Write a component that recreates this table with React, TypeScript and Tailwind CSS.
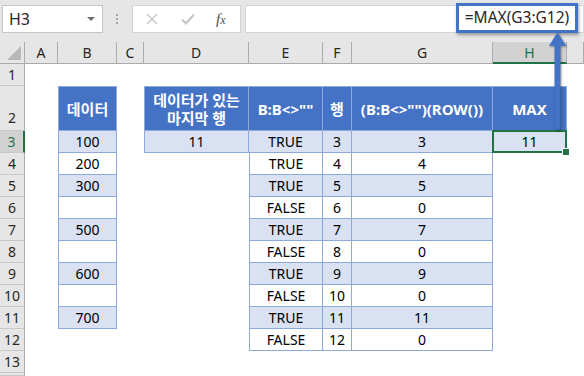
import React from "react";

const font = "font-['Noto_Sans','Noto_Sans_CJK_KR',sans-serif]";

const letters = ["A", "B", "C", "D", "E", "F", "G", "H", ""];

const cells: Record<string, string> = {
  "2-2": "데이터",
  "2-4": "데이터가 있는\n마지막 행",
  "2-5": 'B:B<>""',
  "2-6": "행",
  "2-7": '(B:B<>"")(ROW())',
  "2-8": "MAX",
  "3-4": "11",
  "3-8": "11",
};

const colB = ["100", "200", "300", "", "500", "", "600", "", "700"];
colB.forEach((v, i) => (cells[`${i + 3}-2`] = v));
const colG = ["3", "4", "5", "0", "7", "0", "9", "0", "11", "0"];
colG.forEach((v, i) => {
  const r = i + 3;
  cells[`${r}-5`] = v === "0" ? "FALSE" : "TRUE";
  cells[`${r}-6`] = String(r);
  cells[`${r}-7`] = v;
});

function isTable(r: number, c: number) {
  if (c === 2) return r >= 2 && r <= 11;
  if (c === 4 || c === 8) return r >= 2 && r <= 3;
  if (c >= 5 && c <= 7) return r >= 2 && r <= 12;
  return false;
}

function BodyCell({ r, c }: { r: number; c: number }) {
  if (!isTable(r, c)) return <div className="bg-white" />;
  const head = r === 2;
  const band = !head && r % 2 === 1;
  const cls = [
    "relative flex items-center justify-center text-center whitespace-pre border-[#8ea9db] border-r border-b",
    isTable(r, c - 1) ? "" : "border-l",
    isTable(r - 1, c) ? "" : "border-t",
    head
      ? "bg-[#4472c4] text-white font-bold text-[15px] leading-[18px]"
      : band
      ? "bg-[#d9e1f2] text-black text-[14px]"
      : "bg-white text-black text-[14px]",
  ].join(" ");
  return (
    <div className={cls}>
      {cells[`${r}-${c}`]}
      {r === 3 && c === 8 && (
        <div className="absolute -left-[1px] -top-[1px] -right-[1px] -bottom-[1px] border-2 border-[#217346]">
          <div className="absolute -right-[4px] -bottom-[4px] h-[6px] w-[6px] bg-[#217346] outline outline-1 outline-white" />
        </div>
      )}
    </div>
  );
}

export default function App() {
  const rows = Array.from({ length: 14 }, (_, i) => i + 1);
  return (
    <div className={`relative h-[376px] w-[584px] overflow-hidden bg-white ${font}`}>
      {/* formula bar */}
      <div className="flex h-[42px] items-start bg-[#e6e6e6] pt-[5px]">
        <div className="ml-[2px] flex h-[28px] w-[101px] items-center justify-between border border-[#c6c6c6] bg-white pl-[6px] pr-[7px] text-[16px] text-[#262626]">
          <span>H3</span>
          <span className="h-0 w-0 border-x-[4px] border-t-[4px] border-x-transparent border-t-[#6d6d6d]" />
        </div>
        <div className="ml-[13px] mt-[9px] flex flex-col gap-[2px]">
          <span className="h-[2px] w-[2px] bg-[#a6a6a6]" />
          <span className="h-[2px] w-[2px] bg-[#a6a6a6]" />
          <span className="h-[2px] w-[2px] bg-[#a6a6a6]" />
        </div>
        <div className="ml-[14px] flex h-[28px] w-[109px] items-center border border-[#d4d4d4] bg-white">
          <svg width="12" height="12" viewBox="0 0 12 12" className="ml-[13px]">
            <path d="M1 1L11 11M11 1L1 11" stroke="#c4c4c4" strokeWidth="1.4" />
          </svg>
          <svg width="14" height="12" viewBox="0 0 14 12" className="ml-[23px]">
            <path d="M1 6.5L5 10.5L13 1.5" stroke="#c4c4c4" strokeWidth="2" fill="none" />
          </svg>
          <span className="ml-[21px] font-['Liberation_Serif',serif] text-[15px] italic text-[#505050]">
            f<span className="text-[12px]">x</span>
          </span>
        </div>
        <div className="ml-[4px] h-[28px] flex-1 border border-[#d4d4d4] bg-white" />
      </div>

      {/* sheet */}
      <div className="grid grid-cols-[25px_33px_59px_27px_105px_74px_29px_141px_74px_17px] grid-rows-[22px_22px_45px_repeat(11,22px)_3px]">
        <div className="relative border-b border-r border-[#ababab] bg-[#e6e6e6]">
          <div className="absolute bottom-[3px] right-[3px] h-0 w-0 border-b-[14px] border-l-[14px] border-b-[#b8b8b8] border-l-transparent" />
        </div>
        {letters.map((l, i) =>
          l === "H" ? (
            <div
              key={i}
              className="flex items-center justify-center border-b-2 border-r border-b-[#217346] border-r-[#ababab] bg-[#d2d2d2] text-[14px] text-[#217346]"
            >
              {l}
            </div>
          ) : (
            <div
              key={i}
              className="flex items-center justify-center border-b border-r border-[#ababab] bg-[#e6e6e6] text-[14px] text-[#262626]"
            >
              {l}
            </div>
          )
        )}
        {rows.map((r) => (
          <React.Fragment key={r}>
            {r === 3 ? (
              <div className="flex items-center justify-center border-b border-r-2 border-b-[#c8c8c8] border-r-[#217346] bg-[#d2d2d2] text-[14px] text-[#217346]">
                {r}
              </div>
            ) : (
              <div
                className={`flex items-center justify-center border-b border-r border-b-[#c8c8c8] border-r-[#ababab] bg-[#e6e6e6] text-[14px] text-[#262626] ${
                  r === 2 ? "items-end pb-[2px]" : ""
                }`}
              >
                {r < 14 ? r : null}
              </div>
            )}
            {Array.from({ length: 9 }, (_, k) => (
              <BodyCell key={k} r={r} c={k + 1} />
            ))}
          </React.Fragment>
        ))}
      </div>

      {/* callout */}
      <div className="absolute left-[456px] top-[3px] flex h-[30px] w-[122px] items-center justify-center border-[3px] border-[#4472c4] bg-white text-[15.5px] text-[#262626] shadow-[1px_2px_3px_rgba(0,0,0,0.35)]">
        =MAX(G3:G12)
      </div>
      <svg
        className="absolute left-0 top-0 drop-shadow-[1px_1px_1px_rgba(0,0,0,0.35)]"
        width="584"
        height="140"
        viewBox="0 0 584 140"
      >
        <line x1="557.5" y1="44" x2="557.5" y2="127" stroke="#4472c4" strokeWidth="6" strokeLinecap="round" />
        <polygon points="549,46 557.5,32 566,46" fill="#4472c4" />
      </svg>
    </div>
  );
}
